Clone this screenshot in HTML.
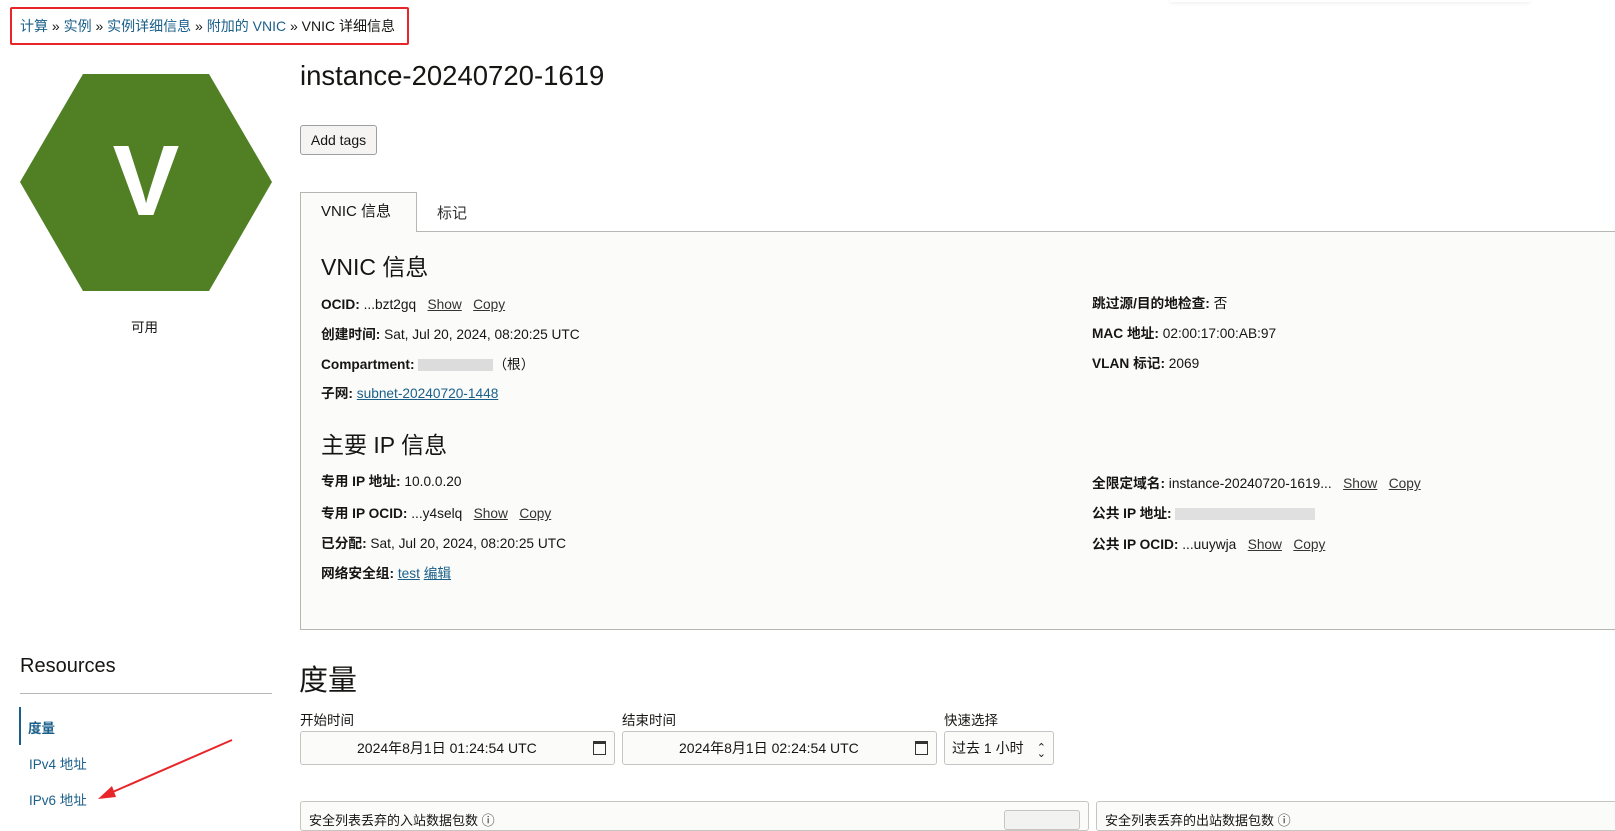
<!DOCTYPE html>
<html><head><meta charset="utf-8">
<style>
*{margin:0;padding:0;box-sizing:border-box}
body{width:1615px;height:820px;overflow:hidden;background:#fff;font-family:"Liberation Sans","Noto Sans CJK SC",sans-serif;color:#161513;position:relative;font-size:13.7px}
.a{position:absolute;white-space:nowrap}
.lk{color:#1a5f8a}
.u{text-decoration:underline;color:#333}
.ul{text-decoration:underline;color:#1a5f8a}
b{font-weight:bold}
.row{position:absolute;white-space:nowrap;line-height:16px}
.inp{position:absolute;border:1px solid #c7c5c0;border-radius:3px;background:#fbfbfa;height:34px;font-size:14px;line-height:32px}
</style></head><body>
<div class="a" style="left:1170px;top:-2px;width:360px;height:4px;box-shadow:0 1px 4px rgba(0,0,0,.08)"></div>
<div class="a" style="left:10px;top:7px;width:399px;height:38px;border:2px solid #e8262a;border-radius:2px"></div>
<div class="a" style="left:20px;top:17px;font-size:14px;line-height:18px"><span class="lk">计算</span> » <span class="lk">实例</span> » <span class="lk">实例详细信息</span> » <span class="lk">附加的 VNIC</span> » <span>VNIC 详细信息</span></div>

<svg class="a" style="left:20px;top:74px" width="252" height="217" viewBox="0 0 252 217"><polygon points="63,0 189,0 252,108 189,217 63,217 0,108" fill="#507f24"/><text x="126" y="141" text-anchor="middle" font-family="Liberation Sans" font-weight="bold" font-size="100" fill="#fff">V</text></svg>
<div class="a" style="left:131px;top:316px;font-size:13.5px">可用</div>

<div class="a" style="left:300px;top:60px;font-size:27.5px;line-height:32px">instance-20240720-1619</div>
<div class="a" style="left:300px;top:125px;width:77px;height:30px;border:1px solid #9e9e9e;border-radius:3px;background:#f5f4f2;font-size:14px;line-height:28px;text-align:center">Add tags</div>

<div class="a" style="left:300px;top:231px;width:1330px;height:399px;border:1px solid #b8b6b2;background:#fbfbfa"></div>
<div class="a" style="left:300px;top:192px;width:117px;height:40px;border:1px solid #b8b6b2;border-bottom:none;background:#fbfbfa;font-size:15px;line-height:38px;padding-left:20px">VNIC 信息</div>
<div class="a" style="left:437px;top:202px;font-size:15px;color:#333">标记</div>

<div class="a" style="left:321px;top:248px;font-size:23px">VNIC 信息</div>
<div class="row" style="left:321px;top:297px"><b>OCID:</b> ...bzt2gq &nbsp; <span class="u">Show</span> &nbsp; <span class="u">Copy</span></div>
<div class="row" style="left:321px;top:327px"><b>创建时间:</b> Sat, Jul 20, 2024, 08:20:25 UTC</div>
<div class="row" style="left:321px;top:357px"><b>Compartment:</b> <span style="display:inline-block;width:75px;height:12px;background:#dcdcdc;vertical-align:middle"></span>（根）</div>
<div class="row" style="left:321px;top:386px"><b>子网:</b> <span class="ul">subnet-20240720-1448</span></div>

<div class="row" style="left:1092px;top:296px"><b>跳过源/目的地检查:</b> 否</div>
<div class="row" style="left:1092px;top:326px"><b>MAC 地址:</b> 02:00:17:00:AB:97</div>
<div class="row" style="left:1092px;top:356px"><b>VLAN 标记:</b> 2069</div>

<div class="a" style="left:321px;top:426px;font-size:23px">主要 IP 信息</div>
<div class="row" style="left:321px;top:474px"><b>专用 IP 地址:</b> 10.0.0.20</div>
<div class="row" style="left:321px;top:506px"><b>专用 IP OCID:</b> ...y4selq &nbsp; <span class="u">Show</span> &nbsp; <span class="u">Copy</span></div>
<div class="row" style="left:321px;top:536px"><b>已分配:</b> Sat, Jul 20, 2024, 08:20:25 UTC</div>
<div class="row" style="left:321px;top:566px"><b>网络安全组:</b> <span class="ul">test</span> <span class="ul">编辑</span></div>

<div class="row" style="left:1092px;top:476px"><b>全限定域名:</b> instance-20240720-1619... &nbsp; <span class="u">Show</span> &nbsp; <span class="u">Copy</span></div>
<div class="row" style="left:1092px;top:506px"><b>公共 IP 地址:</b> <span style="display:inline-block;width:140px;height:12px;background:#e0e0e0;vertical-align:middle"></span></div>
<div class="row" style="left:1092px;top:537px"><b>公共 IP OCID:</b> ...uuywja &nbsp; <span class="u">Show</span> &nbsp; <span class="u">Copy</span></div>

<div class="a" style="left:20px;top:655px;font-size:20px">Resources</div>
<div class="a" style="left:20px;top:693px;width:252px;height:1px;background:#b8b6b2"></div>
<div class="a" style="left:19px;top:707px;width:2px;height:38px;background:#1a5f8a"></div>
<div class="a lk" style="left:28px;top:717px;font-weight:bold;font-size:13.5px">度量</div>
<div class="a lk" style="left:29px;top:753px;font-size:13.5px">IPv4 地址</div>
<div class="a lk" style="left:29px;top:789px;font-size:13.5px">IPv6 地址</div>
<svg class="a" style="left:0;top:0" width="300" height="820"><line x1="232" y1="740" x2="108" y2="794" stroke="#e8262a" stroke-width="2"/><polygon points="98,799 112,786 116,797" fill="#e8262a"/></svg>

<div class="a" style="left:299px;top:657px;font-size:29px">度量</div>
<div class="a" style="left:300px;top:709px;font-size:13.5px">开始时间</div>
<div class="a" style="left:622px;top:709px;font-size:13.5px">结束时间</div>
<div class="a" style="left:944px;top:709px;font-size:13.5px">快速选择</div>
<div class="inp" style="left:300px;top:731px;width:315px;padding-left:56px">2024年8月1日 01:24:54 UTC<span style="position:absolute;right:8px;top:9px;width:13px;height:14px;border:1.5px solid #333;border-top-width:3px"></span></div>
<div class="inp" style="left:622px;top:731px;width:315px;padding-left:56px">2024年8月1日 02:24:54 UTC<span style="position:absolute;right:8px;top:9px;width:13px;height:14px;border:1.5px solid #333;border-top-width:3px"></span></div>
<div class="inp" style="left:944px;top:731px;width:110px;padding-left:7px">过去 1 小时<span style="position:absolute;right:7px;top:0;font-size:11px">⌃</span><span style="position:absolute;right:7px;top:6px;font-size:11px">⌄</span></div>

<div class="a" style="left:300px;top:801px;width:789px;height:30px;border:1px solid #c7c5c0;border-radius:3px;background:#fbfbfa"></div>
<div class="a" style="left:309px;top:810px;font-size:13px">安全列表丢弃的入站数据包数 ⓘ</div>
<div class="a" style="left:1004px;top:810px;width:76px;height:20px;border:1px solid #c7c5c0;border-radius:3px;background:#f2f2f0"></div>
<div class="a" style="left:1096px;top:801px;width:540px;height:30px;border:1px solid #c7c5c0;border-radius:3px;background:#fbfbfa"></div>
<div class="a" style="left:1105px;top:810px;font-size:13px">安全列表丢弃的出站数据包数 ⓘ</div>
</body></html>
